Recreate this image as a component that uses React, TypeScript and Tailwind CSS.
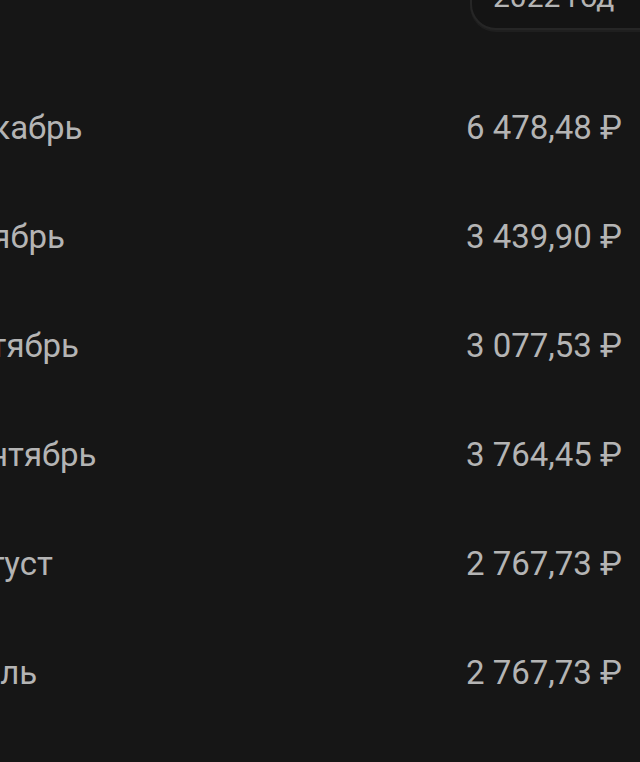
const months = [
  { name: "Декабрь", sum: "6 478,48 ₽" },
  { name: "Ноябрь", sum: "3 439,90 ₽" },
  { name: "Октябрь", sum: "3 077,53 ₽" },
  { name: "Сентябрь", sum: "3 764,45 ₽" },
  { name: "Август", sum: "2 767,73 ₽" },
  { name: "Июль", sum: "2 767,73 ₽" },
];

export default function App() {
  return (
    <div className="w-[640px] h-[762px] overflow-hidden bg-[#161616] font-['Roboto',sans-serif] text-[#b4b4b4]">
      {/* year picker, cut off at the top */}
      <div className="flex justify-end h-[73px]">
        <div className="mt-[-26px] mr-[-40px] h-[56px] w-[210px] rounded-[26px] border-[2px] border-[#262626] bg-[#141414] flex items-start pt-[6px] pl-[21px] text-[30px] leading-none shadow-[0_2px_0_#1f1f1f]">
          2022 год
        </div>
      </div>

      <ul className="flex flex-col">
        {months.map((m) => (
          <li key={m.name} className="h-[109px] flex items-center justify-between pr-[18px]">
            <span className="ml-[-50px] text-[33px] leading-none">{m.name}</span>
            <span className="text-[33px] leading-none">{m.sum}</span>
          </li>
        ))}
      </ul>
    </div>
  );
}
